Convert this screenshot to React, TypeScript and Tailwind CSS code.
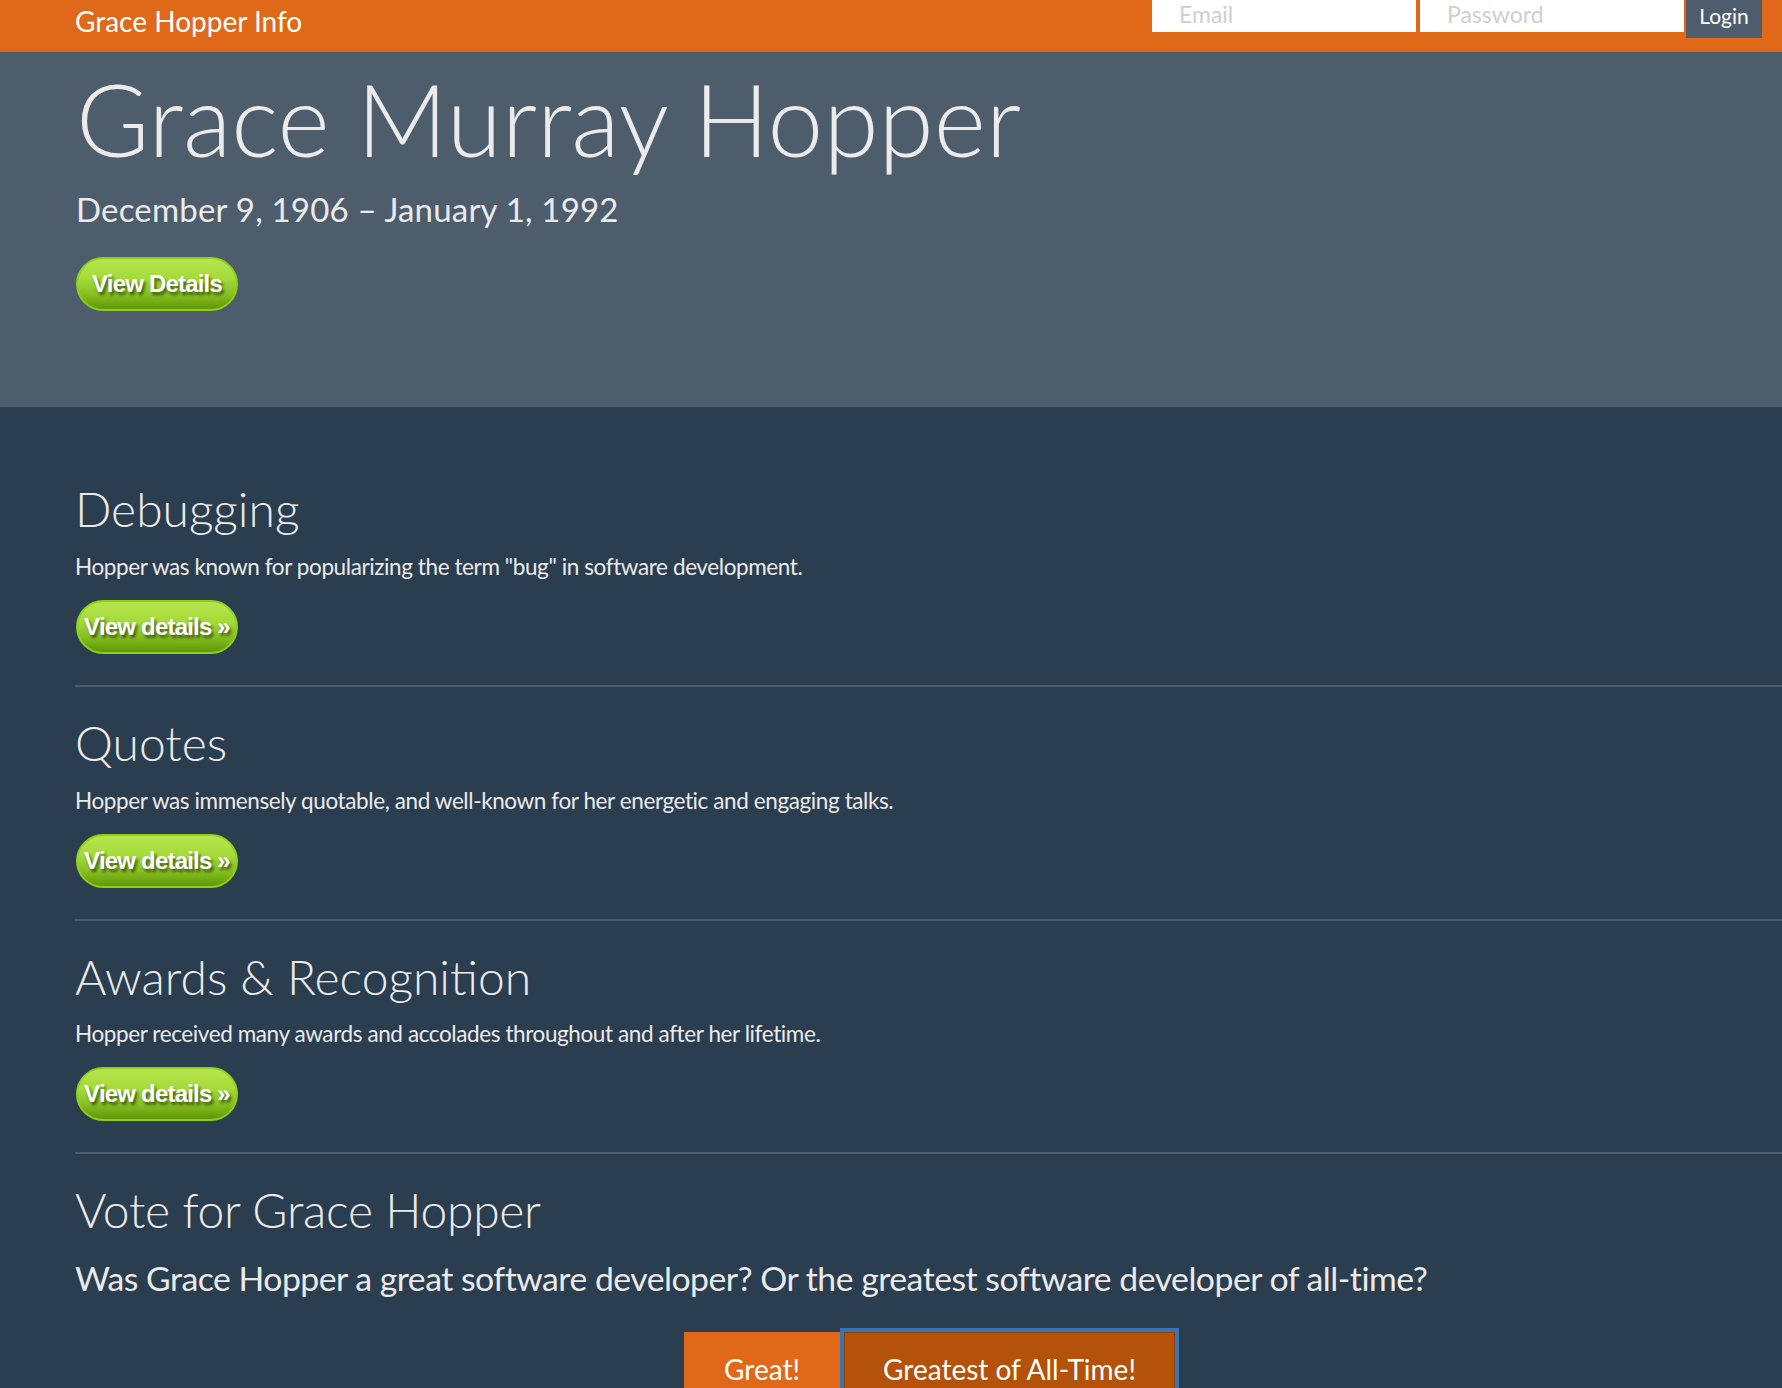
import React from 'react';

const sections = [
  {
    title: 'Debugging',
    text: 'Hopper was known for popularizing the term "bug" in software development.',
  },
  {
    title: 'Quotes',
    text: 'Hopper was immensely quotable, and well-known for her energetic and engaging talks.',
  },
  {
    title: 'Awards & Recognition',
    text: 'Hopper received many awards and accolades throughout and after her lifetime.',
  },
];

function GreenButton({ label }: { label: string }) {
  return (
    <button
      type="button"
      className="
        flex
        h-[54px]
        w-[162px]
        items-center
        justify-center
        rounded-full
        border-2
        border-[#8fcf1c]
        bg-[linear-gradient(to_bottom,#b7e54c_0%,#a4da3a_40%,#86c021_70%,#5f9806_100%)]
        font-['Liberation_Sans',Arial,sans-serif]
        text-[24px]
        font-bold
        tracking-[-0.8px]
        text-white
        [text-shadow:2px_3px_3px_rgba(0,0,0,0.55)]
      "
    >
      {label}
    </button>
  );
}

export default function App() {
  return (
    <div className="h-[1388px] overflow-hidden bg-[#2b3e50] font-['Lato','Noto_Sans',sans-serif] text-[#ebebeb]">
      <nav className="flex h-[52px] items-start bg-[#df6919]">
        <a className="pl-[75px] pt-[7px] text-[28px] leading-none text-white">Grace Hopper Info</a>

        <form className="mr-[20px] ml-auto flex items-start">
          <input
            placeholder="Email"
            className="h-[32px] w-[264px] bg-white px-[27px] pb-[4px] text-[23px] text-[#555] outline-none placeholder:text-[#cfcfcf]"
          />
          <input
            placeholder="Password"
            className="ml-[4px] h-[32px] w-[264px] bg-white px-[27px] pb-[4px] text-[23px] text-[#555] outline-none placeholder:text-[#cfcfcf]"
          />
          <button type="button" className="ml-[2px] h-[38px] w-[76px] bg-[#4e5d6c] pb-[8px] text-[21px] text-white">
            Login
          </button>
        </form>
      </nav>

      <header className="h-[355px] bg-[#4e5d6c] pt-[11px] pl-[76px]">
        <h1 className="text-[100px] leading-[1.1] font-light">Grace Murray Hopper</h1>
        <p className="mt-[13px] text-[33px] leading-[1.4] tracking-[0.2px]">December 9, 1906 – January 1, 1992</p>
        <div className="mt-[25px]">
          <GreenButton label="View Details" />
        </div>
      </header>

      <main className="pt-[76px] pl-[75px]">
        {sections.map((section) => (
          <section key={section.title}>
            <h2 className="text-[48px] leading-[1.1] font-light">{section.title}</h2>
            <p className="mt-[15px] text-[22.5px] leading-[32px] tracking-[-0.4px]">{section.text}</p>
            <div className="mt-[17px] pl-px">
              <GreenButton label="View details »" />
            </div>
            <hr className="mt-[31px] mb-[30px] border-t-2 border-[#4e5d6c]" />
          </section>
        ))}

        <section>
          <h2 className="text-[48px] leading-[1.1] font-light tracking-[-0.3px]">Vote for Grace Hopper</h2>
          <p className="mt-[18px] text-[33.75px] leading-[1.4] tracking-[-0.5px]">
            Was Grace Hopper a great software developer? Or the greatest software developer of all-time?
          </p>
          <div className="mt-[30px] flex justify-center pl-[2px]">
            <button type="button" className="h-[90px] w-[156px] bg-[#df6919] pb-[17px] text-[28px] text-white">
              Great!
            </button>
            <button
              type="button"
              className="ml-[4px] h-[90px] w-[331px] border border-[#8f4206] bg-[#b35208] pb-[17px] text-[28px] text-white outline-4 outline-[#3872b8]"
            >
              Greatest of All-Time!
            </button>
          </div>
        </section>
      </main>
    </div>
  );
}
